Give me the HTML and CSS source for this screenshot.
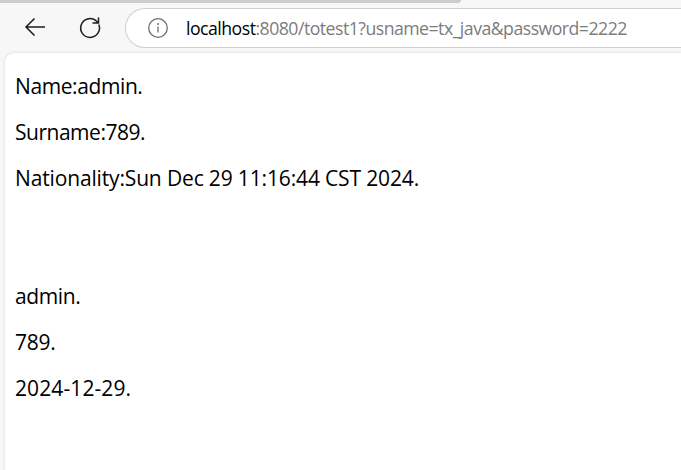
FILE: index.html
```
<!DOCTYPE html>
<html lang="en">
<head>
<meta charset="utf-8">
<title>totest1</title>
<link rel="stylesheet" href="styles.css">
</head>
<body>
<div class="tabstrip"></div>
<header class="toolbar">
  <svg class="icon back" viewBox="0 0 24 24"><path d="M22 11H3M11.500 2.500L3 11l8.500 8.500"/></svg>
  <svg class="icon reload" viewBox="0 0 24 24"><path d="M20.800 8.500A9.400 9.400 0 1 1 18 4.700L20.500 7M20.500 1.500V7H14.500"/></svg>
  <div class="address">
    <svg class="info" viewBox="0 0 22 22"><circle cx="11" cy="11" r="9.300"/><path d="M11 9.500v6"/><circle class="dot" cx="11" cy="7" r="1"/></svg>
    <div class="url"><span class="host">localhost</span><span class="path">:8080/totest1?usname=tx_java&amp;password=2222</span></div>
  </div>
</header>
<main class="page">
  <p class="name">Name:admin.</p>
  <p class="surname">Surname:789.</p>
  <p class="nationality">Nationality:Sun Dec 29 11:16:44 CST 2024.</p>
  <p class="second">admin.</p>
  <p class="number">789.</p>
  <p class="date">2024-12-29.</p>
</main>
</body>
</html>
```
FILE: styles.css
```
* { box-sizing: border-box; }
body { margin: 0; height: 470px; overflow: hidden; background: #f7f7f7; font-family: "Open Sans", "Noto Sans", sans-serif; display: flex; flex-direction: column; }
.tabstrip { flex: none; width: 461px; height: 3px; background: #cdcdcd; border-radius: 0 0 7px 0; }
.toolbar { flex: none; height: 50px; display: flex; align-items: center; }
.icon { width: 24px; height: 24px; fill: none; stroke: #1c1c1c; stroke-width: 1.5; }
.back { margin-left: 23px; }
.reload { margin-left: 31px; }
.address { margin-left: 23px; flex: 1; height: 40px; border: 1px solid #cfcfcf; border-right: 0; border-radius: 20px 0 0 20px; background: #fff; display: flex; align-items: center; }
.info { margin-left: 20.500px; width: 22px; height: 22px; fill: none; stroke: #707070; stroke-width: 1.3; }
.info .dot { fill: #707070; stroke: none; }
.url { margin-left: 17.500px; font-size: 17.700px; letter-spacing: -.52px; white-space: nowrap; color: #7c7c7c; }
.host { color: #000; }
.page { flex: 1; margin-left: 5px; padding: 19px 10px 0; background: #fff; border-top-left-radius: 9px; box-shadow: 0 0 3px rgba(0, 0, 0, .16); font-size: 21px; color: #000; }
p { margin: 0 0 18px; line-height: 28px; white-space: nowrap; }
.name { letter-spacing: -.4px; }
.surname { letter-spacing: -.48px; }
.nationality { letter-spacing: -.15px; }
.second { margin-top: 90px; letter-spacing: -.4px; }
.number { letter-spacing: -.25px; }
.date { letter-spacing: .1px; }
```
